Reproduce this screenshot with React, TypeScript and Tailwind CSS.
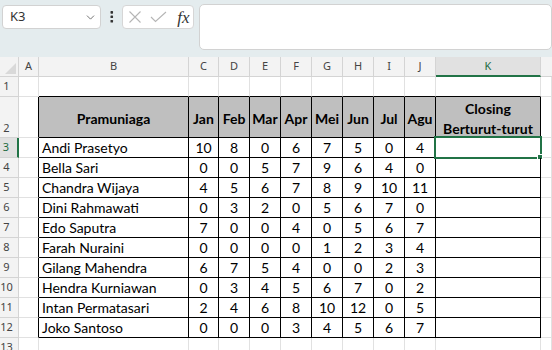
import React from 'react';
import { ChevronDown } from 'lucide-react';

const cols = 'grid grid-cols-[19px_20px_150px_30px_31px_31px_31px_31px_31px_31px_31px_105px_1fr]';
const letters = ['A', 'B', 'C', 'D', 'E', 'F', 'G', 'H', 'I', 'J'];
const months = ['Jan', 'Feb', 'Mar', 'Apr', 'Mei', 'Jun', 'Jul', 'Agu'];

const sales: [string, number[]][] = [
  ['Andi Prasetyo', [10, 8, 0, 6, 7, 5, 0, 4]],
  ['Bella Sari', [0, 0, 5, 7, 9, 6, 4, 0]],
  ['Chandra Wijaya', [4, 5, 6, 7, 8, 9, 10, 11]],
  ['Dini Rahmawati', [0, 3, 2, 0, 5, 6, 7, 0]],
  ['Edo Saputra', [7, 0, 0, 4, 0, 5, 6, 7]],
  ['Farah Nuraini', [0, 0, 0, 0, 1, 2, 3, 4]],
  ['Gilang Mahendra', [6, 7, 5, 4, 0, 0, 2, 3]],
  ['Hendra Kurniawan', [0, 3, 4, 5, 6, 7, 0, 2]],
  ['Intan Permatasari', [2, 4, 6, 8, 10, 12, 0, 5]],
  ['Joko Santoso', [0, 0, 0, 3, 4, 5, 6, 7]],
];

const grid = 'border-r border-b border-r-[#e1e1e1] border-b-[#e1e1e1]';
const headFont = { fontFamily: '"Noto Sans", sans-serif' };

function RowHead({ n, bottom, active }: { n: number; bottom?: boolean; active?: boolean }) {
  return (
    <div
      className={
        'flex justify-center pr-[5px] text-[11px] border-b border-b-[#d4d4d4] ' +
        (bottom ? 'items-end pb-[1px] ' : 'items-center ') +
        (active
          ? 'bg-[#e1e1e1] text-[#1e6b41] border-r-2 border-r-[#217346]'
          : 'bg-[#f3f3f3] text-[#444] border-r border-r-[#d4d4d4]')
      }
      style={headFont}
    >
      {n}
    </div>
  );
}

function TopBar() {
  return (
    <div className="h-[57px] bg-[#e4ecee] flex items-start">
      <div className="ml-[2px] mt-[5px] w-[101px] h-[24px] rounded-[4px] border border-[#d2d2d2] bg-white flex items-center justify-between pl-[7px] pr-[3px]">
        <span className="text-[13px] text-[#333]" style={headFont}>K3</span>
        <ChevronDown size={13} strokeWidth={1.5} color="#555" />
      </div>
      <svg className="ml-[9px] mt-[10px]" width="4" height="14" viewBox="0 0 4 14">
        <rect x="0.5" y="1" width="2.6" height="2.6" rx="0.6" fill="#333" />
        <rect x="0.5" y="5.5" width="2.6" height="2.6" rx="0.6" fill="#333" />
        <rect x="0.5" y="10" width="2.6" height="2.6" rx="0.6" fill="#333" />
      </svg>
      <div className="ml-[8px] mt-[5px] w-[73px] h-[24px] rounded-[4px] border border-[#d6d6d6] bg-white flex items-center pl-[5px]">
        <svg width="14" height="14" viewBox="0 0 14 14">
          <path d="M1.5 1.5 L12.5 12.5 M12.5 1.5 L1.5 12.5" stroke="#b5b5b5" strokeWidth="1.1" fill="none" />
        </svg>
        <svg className="ml-[8px]" width="17" height="12" viewBox="0 0 17 12">
          <path d="M1 6 L5.5 10.5 L16 1" stroke="#b5b5b5" strokeWidth="1.1" fill="none" />
        </svg>
        <span
          className="ml-[10px] text-[17px] italic text-[#333] leading-none"
          style={{ fontFamily: '"Liberation Serif", serif' }}
        >
          fx
        </span>
      </div>
      <div className="ml-[5px] mt-[4px] w-[360px] h-[46px] rounded-[5px] border border-[#d2d2d2] bg-white" />
    </div>
  );
}

export default function App() {
  return (
    <div className="w-[552px] h-[350px] overflow-hidden bg-white" style={{ fontFamily: 'Lato, sans-serif' }}>
      <TopBar />
      <div className={cols + ' grid-rows-[20px_20px_41px_repeat(10,20px)_20px]'}>
        {/* column headers */}
        <div className="bg-[#f3f3f3] border-r border-b border-[#d4d4d4] flex items-end justify-end pr-[2px] pb-[2px]">
          <svg width="11" height="11" viewBox="0 0 11 11">
            <polygon points="11,0 11,11 0,11" fill="#d9d9d9" />
          </svg>
        </div>
        {letters.map((l) => (
          <div
            key={l}
            className="bg-[#f3f3f3] border-r border-b border-[#d4d4d4] flex items-center justify-center text-[11px] text-[#444]"
            style={headFont}
          >
            {l}
          </div>
        ))}
        <div
          className="bg-[#e1e1e1] border-r border-r-[#d4d4d4] border-b-2 border-b-[#217346] flex items-center justify-center text-[11px] text-[#1e6b41]"
          style={headFont}
        >
          K
        </div>
        <div className="bg-[#f3f3f3] border-b border-[#d4d4d4]" />

        {/* row 1 */}
        <RowHead n={1} />
        <div className={grid} />
        {Array.from({ length: 10 }).map((_, i) => (
          <div key={i} className="border-r border-b border-r-[#e1e1e1] border-b-black" />
        ))}
        <div className={grid} />

        {/* row 2 - table header */}
        <RowHead n={2} bottom />
        <div className="border-r border-b border-r-black border-b-[#e1e1e1]" />
        <div className="bg-[#bfbfbf] border-r border-b border-black flex items-center justify-center pt-[3px] font-bold text-[14px] text-black">
          Pramuniaga
        </div>
        {months.map((m) => (
          <div
            key={m}
            className="bg-[#bfbfbf] border-r border-b border-black flex items-center justify-center pt-[3px] font-bold text-[14px] text-black"
          >
            {m}
          </div>
        ))}
        <div className="bg-[#bfbfbf] border-r border-b border-black flex flex-col items-center justify-center pt-[3px] font-bold text-[14px] leading-[20px] text-black">
          <span>Closing</span>
          <span>Berturut-turut</span>
        </div>
        <div className={grid} />

        {/* data rows */}
        {sales.map(([name, vals], r) => (
          <React.Fragment key={name}>
            <RowHead n={r + 3} active={r === 0} />
            <div className="border-r border-b border-r-black border-b-[#e1e1e1]" />
            <div className="border-r border-b border-black flex items-center pl-[3px] text-[14px] text-black">
              {name}
            </div>
            {vals.map((v, i) => (
              <div key={i} className="border-r border-b border-black flex items-center justify-center text-[14px] text-black">
                {v}
              </div>
            ))}
            <div className="relative border-r border-b border-black">
              {r === 0 && (
                <div className="absolute -left-[2px] -top-[2px] -right-[2px] -bottom-[2px] border-2 border-[#217346]">
                  <div className="absolute -right-[3px] -bottom-[3px] w-[6px] h-[6px] bg-[#217346] border border-white" />
                </div>
              )}
            </div>
            <div className={grid} />
          </React.Fragment>
        ))}

        {/* row 13 */}
        <RowHead n={13} />
        {Array.from({ length: 12 }).map((_, i) => (
          <div key={i} className={grid} />
        ))}
      </div>
    </div>
  );
}
